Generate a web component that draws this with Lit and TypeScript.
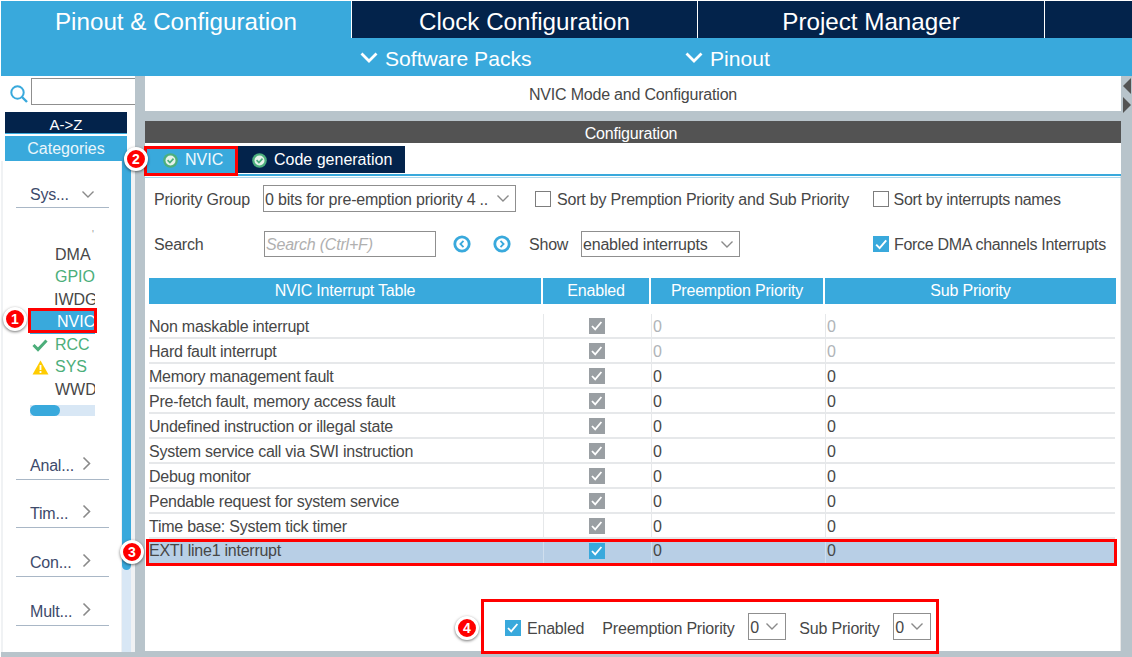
import { LitElement, html, css, svg } from "lit";
import { customElement } from "lit/decorators.js";

const chevron = (c = "#8a8a8a", w = 1.4) => html`<svg class="chev" width="14" height="9" viewBox="0 0 14 9"><path d="M1.5 1.5 7 7l5.5-5.5" fill="none" stroke=${c} stroke-width=${w}/></svg>`;
const chevBig = html`<svg width="18" height="11" viewBox="0 0 18 11"><path d="M1.5 1.5 9 9l7.5-7.5" fill="none" stroke="#fff" stroke-width="2.8"/></svg>`;
const chevRight = html`<svg width="9" height="15" viewBox="0 0 9 15"><path d="M1.5 1.5 7.5 7.5l-6 6" fill="none" stroke="#8a8a8a" stroke-width="1.6"/></svg>`;
const tick = svg`<path d="M3 8l3.2 3.4L12.4 4" fill="none" stroke="#fff" stroke-width="1.8"/>`;
const checkbox = (kind: "off" | "on" | "grey") => html`<span class="cb ${kind}">${kind === "off" ? "" : html`<svg width="15" height="15" viewBox="0 0 15 15">${tick}</svg>`}</span>`;
const okBadge = html`<svg width="15" height="15" viewBox="0 0 15 15"><circle cx="7.5" cy="7.5" r="7.3" fill="#4caf7d"/><circle cx="7.5" cy="7.5" r="5" fill="#e6f3ea"/><path d="M4.6 7.2l2.3 2.4 3.6-3.9" fill="none" stroke="#4caf7d" stroke-width="1.7"/></svg>`;
const navBtn = (left: boolean) => html`<svg width="18" height="18" viewBox="0 0 18 18"><circle cx="9" cy="9" r="7.2" fill="none" stroke="#39a9dc" stroke-width="2.8"/><path d=${left ? "M10.5 5.8 7.4 9l3.1 3.2" : "M7.5 5.8 10.6 9l-3.1 3.2"} fill="none" stroke="#39a9dc" stroke-width="1.8"/></svg>`;

const rows: [string, boolean][] = [
  ["Non maskable interrupt", true],
  ["Hard fault interrupt", true],
  ["Memory management fault", false],
  ["Pre-fetch fault, memory access fault", false],
  ["Undefined instruction or illegal state", false],
  ["System service call via SWI instruction", false],
  ["Debug monitor", false],
  ["Pendable request for system service", false],
  ["Time base: System tick timer", false],
];

@customElement("app-root")
export class AppRoot extends LitElement {
  static styles = css`
    :host { display: block; position: relative; width: 1132px; height: 657px; overflow: hidden; background: #fff;
      font-family: "Liberation Sans", Arial, sans-serif; font-size: 16px; letter-spacing: -0.2px; color: #474747; box-sizing: border-box; padding: 1px 0 0 1px; }
    * { box-sizing: border-box; }
    .tabs { display: flex; height: 37px; background: #03234b; color: #fff; font-size: 24.2px; letter-spacing: 0; }
    .tab { display: flex; align-items: center; justify-content: center; border-right: 1px solid #fff; padding-top: 4px; }
    .tab.active { width: 351px; background: #39a9dc; }
    .tab.clock { width: 346px; }
    .tab.project { width: 347px; }
    .subbar { height: 38px; background: #39a9dc; color: #fff; font-size: 21.1px; letter-spacing: 0; display: flex; align-items: center; padding: 3px 0 0 359px; }
    .sub { display: flex; align-items: center; gap: 7px; }
    .sub svg { margin-top: -2px; }
    .sub.packs { width: 325px; }
    .main { display: flex; height: 581px; background: #b8c4cb; }
    .left { width: 134px; background: #fff; display: flex; flex-direction: column; height: 576px; }
    .search { height: 36px; display: flex; align-items: flex-start; padding: 2px 0 0 8px; gap: 2px; }
    .search svg { margin-top: 6px; }
    .search .in { flex: 1; height: 27px; border: 1px solid #8f8f8f; border-right: none; }
    .az { margin-left: 4px; width: 122px; height: 22px; background: #03234b; color: #fff; text-align: center; line-height: 26px; font-size: 15px; letter-spacing: 0; border-bottom: 1px solid #39a9dc; }
    .cat { margin: 2px 0 0 4px; width: 122px; height: 25px; background: #39a9dc; color: #eaf6fb; text-align: center; line-height: 25px; letter-spacing: 0; }
    .side { flex: 1; display: flex; background: #f0f2f4; padding-left: 2px; min-height: 0; }
    .card { width: 118px; background: #fff; padding: 2px 0 0 13px; }
    .sec { width: 93px; border-bottom: 1px solid #a9b7c6; display: flex; justify-content: space-between; padding: 6px 18px 0 14px; color: #3d4a6b; }
    .sec svg { margin-top: -1px; }
    .sec.sys { height: 45px; padding: 23px 14px 0 14px; }
    .sec.sys svg { margin-top: 4px; }
    .sec.anal { margin-top: 35px; height: 29px; }
    .sec.rest { margin-top: 19px; height: 29px; }
    .sec.last { margin-top: 20px; height: 29px; }
    .list { margin: 21px 0 0 14px; width: 65px; overflow: hidden; white-space: nowrap; letter-spacing: 0; }
    .dot { height: 14.6px; font-size: 10px; padding-left: 62px; color: #999; }
    .it { height: 22.5px; line-height: 22px; padding-left: 25px; position: relative; }
    .it.green { color: #4cae7a; }
    .it.sel { background: #39a9dc; color: #fff; padding-left: 27px; }
    .it.iw { padding-left: 24px; }
    .it svg { position: absolute; left: 2px; top: 4px; }
    .hbar { height: 11px; margin-top: 4.4px; background: #d8e7f5; }
    .hbar i { display: block; width: 30px; height: 11px; border-radius: 6px; background: #39a9dc; }
    .vbar { width: 9px; margin-left: 1px; background: #d8e7f5; }
    .vbar i { display: block; height: 409px; border-radius: 0 0 5px 5px; background: #39a9dc; }
    .gutter { width: 10px; }
    .content { width: 976px; height: 575px; background: #fff; display: flex; flex-direction: column; position: relative; }
    .title { height: 35px; text-align: center; line-height: 38px; background: #fff; }
    .band { height: 10px; background: #b8c4cb; }
    .cfg { height: 22px; background: #535353; color: #fff; text-align: center; line-height: 26px; padding-right: 4px; }
    .ctabs { height: 33px; display: flex; padding: 3px 0 0 1px; gap: 2px; border-bottom: 2px solid #39a9dc; position: relative; }
    .ctabs::after { content: ""; position: absolute; left: 0; right: 0; bottom: -4px; height: 1px; background: #a9d8ee; }
    .ctab { height: 27px; display: flex; align-items: center; gap: 7px; color: #fff; background: #03234b; padding-top: 1px; letter-spacing: 0; }
    .ctab.on { width: 90px; background: #39a9dc; padding-left: 17px; color: #f0f9fd; }
    .ctab.off { width: 167px; padding-left: 14px; }
    .body { flex: 1; padding: 9px 5px 0 4px; display: flex; flex-direction: column; border-right: 1px solid #e8e8e8; }
    .line { display: flex; align-items: center; height: 27px; position: relative; }
    .line + .line { margin-top: 19px; height: 26px; }
    .sel-box { height: 100%; border: 1px solid #8f8f8f; display: flex; align-items: center; justify-content: space-between; padding: 0 5px 0 1px; white-space: nowrap; overflow: hidden; }
    .sel-box span { padding-top: 2px; }
    .lab { white-space: nowrap; padding-top: 2px; }
    .w-pg { margin-left: 5px; width: 109px; }
    .sg { width: 253px; }
    .cb { display: inline-flex; width: 16px; height: 16px; flex: none; }
    .cb.off { border: 1px solid #7d7d7d; }
    .cb.on { background: #39a9dc; }
    .cb.grey { background: #9a9fa3; }
    .m1 { margin-left: 19px; }
    .m2 { margin-left: 6px; }
    .m3 { margin-left: 23.6px; }
    .tight { margin-left: 5px; letter-spacing: -0.3px; }
    .w-s { margin-left: 5px; width: 110px; }
    .sinput { width: 172px; height: 100%; border: 1px solid #8f8f8f; font-style: italic; color: #b0b0b0; line-height: 26px; padding-left: 1px; }
    .navs { display: flex; gap: 22px; margin-left: 17px; }
    .show { margin-left: 18px; width: 52px; }
    .ss { width: 159px; }
    .push { margin-left: 133px; }
    .thead, .tr { display: grid; grid-template-columns: 394px 108px 174px 291px; }
    .thead { margin-top: 21px; height: 24px; color: #fff; text-align: center; line-height: 26px; }
    .thead div { background: #39a9dc; border-right: 2px solid #fff; }
    .thead div:last-child { border-right: none; }
    .tb { margin-top: 12px; letter-spacing: -0.25px; }
    .tr { height: 25px; line-height: 25px; border-bottom: 2px solid #e6e8ea; }
    .tr > div { border-left: 1px solid #e6e8ea; padding-left: 1px; }
    .tr > div:first-child { border-left: none; padding-left: 0; }
    .tr .ck { display: flex; justify-content: center; padding-top: 4px; padding-left: 0; padding-right: 2px; }
    .tr .dim { color: #b0b4b8; }
    .tr.hl { background: #b8cfe6; border-bottom: none; height: 24px; line-height: 24px; }
    .tr.hl > div { border-left-color: #d0dfee; }
    .foot { flex: 1; display: flex; align-items: flex-start; padding: 50px 0 0 356px; }
    .foot .f1 { margin-left: 6px; }
    .foot .f2 { margin-left: 18px; width: 146px; }
    .foot .f3 { margin-left: 13px; width: 94px; }
    .mini { width: 38px; height: 27px; padding-right: 6px; padding-left: 1px; flex: none; }
    .foot .lab { margin-top: 5px; }
    .foot .cb { margin-top: 7px; }
    .right { width: 11px; position: relative; }
    .right i { position: absolute; left: 2px; width: 0; height: 0; border-top: 8px solid transparent; border-bottom: 8px solid transparent; }
    .right .l { top: 2px; border-right: 8px solid #535353; }
    .right .r { top: 21px; border-left: 8px solid #535353; }
    .box { position: absolute; border: 3px solid #f00; }
    .b1 { left: 28px; top: 308px; width: 69px; height: 25px; }
    .b2 { left: 144px; top: 146px; width: 94px; height: 30px; }
    .b3 { left: 146px; top: 539px; width: 971px; height: 27px; }
    .b4 { left: 481px; top: 599px; width: 458px; height: 55px; }
    .badge { position: absolute; width: 24px; height: 24px; border-radius: 50%; background: #f00; border: 3px solid #fff; box-shadow: 0 1px 3px rgba(0,0,0,.55);
      color: #fff; font: bold 14px/18px "Liberation Sans", Arial, sans-serif; letter-spacing: 0; text-align: center; }
    .n1 { left: 3px; top: 307px; }
    .n2 { left: 124px; top: 147px; }
    .n3 { left: 120px; top: 540px; }
    .n4 { left: 455px; top: 616px; }
  `;

  render() {
    return html`
      <div class="tabs">
        <div class="tab active">Pinout &amp; Configuration</div>
        <div class="tab clock">Clock Configuration</div>
        <div class="tab project">Project Manager</div>
      </div>
      <div class="subbar">
        <div class="sub packs">${chevBig}Software Packs</div>
        <div class="sub">${chevBig}Pinout</div>
      </div>
      <div class="main">
        <div class="left">
          <div class="search">
            <svg width="20" height="20" viewBox="0 0 20 20"><circle cx="8.5" cy="8.5" r="6.2" fill="none" stroke="#39a9dc" stroke-width="2"/><path d="M13 13l5 5" stroke="#39a9dc" stroke-width="2.4"/></svg>
            <div class="in"></div>
          </div>
          <div class="az">A-&gt;Z</div>
          <div class="cat">Categories</div>
          <div class="side">
            <div class="card">
              <div class="sec sys">Sys...${chevron()}</div>
              <div class="list">
                <div class="dot">'</div>
                <div class="it">DMA</div>
                <div class="it green">GPIO</div>
                <div class="it iw">IWDG</div>
                <div class="it sel">NVIC</div>
                <div class="it green"><svg width="16" height="14" viewBox="0 0 16 14"><path d="M1.5 7l4.5 4.5L14.5 2.5" fill="none" stroke="#4cae7a" stroke-width="3"/></svg>RCC</div>
                <div class="it green"><svg width="17" height="15" viewBox="0 0 17 15"><path d="M8.5 0.5 16.5 14.5H.5z" fill="#ffcc00"/><path d="M8.5 5v5M8.5 11v2" stroke="#fff" stroke-width="1.8"/></svg>SYS</div>
                <div class="it">WWDG</div>
                <div class="hbar"><i></i></div>
              </div>
              <div class="sec anal">Anal...${chevRight}</div>
              <div class="sec rest">Tim...${chevRight}</div>
              <div class="sec last">Con...${chevRight}</div>
              <div class="sec last">Mult...${chevRight}</div>
            </div>
            <div class="vbar"><i></i></div>
          </div>
        </div>
        <div class="gutter"></div>
        <div class="content">
          <div class="title">NVIC Mode and Configuration</div>
          <div class="band"></div>
          <div class="cfg">Configuration</div>
          <div class="ctabs">
            <div class="ctab on">${okBadge}NVIC</div>
            <div class="ctab off">${okBadge}Code generation</div>
          </div>
          <div class="body">
            <div class="line">
              <span class="lab w-pg">Priority Group</span>
              <div class="sel-box sg"><span>0 bits for pre-emption priority 4 ..</span>${chevron()}</div>
              <span class="cb off m1"></span><span class="lab m2">Sort by Premption Priority and Sub Priority</span>
              <span class="cb off m3"></span><span class="lab tight">Sort by interrupts names</span>
            </div>
            <div class="line">
              <span class="lab w-s">Search</span>
              <div class="sinput">Search (Ctrl+F)</div>
              <div class="navs">${navBtn(true)}${navBtn(false)}</div>
              <span class="lab show">Show</span>
              <div class="sel-box ss"><span>enabled interrupts</span>${chevron()}</div>
              <span class="cb on push">${html`<svg width="16" height="16" viewBox="0 0 15 15">${tick}</svg>`}</span><span class="lab tight">Force DMA channels Interrupts</span>
            </div>
            <div class="thead">
              <div>NVIC Interrupt Table</div><div>Enabled</div><div>Preemption Priority</div><div>Sub Priority</div>
            </div>
            <div class="tb">
              ${rows.map(([name, dim]) => html`
                <div class="tr">
                  <div>${name}</div>
                  <div class="ck">${checkbox("grey")}</div>
                  <div class=${dim ? "dim" : ""}>0</div>
                  <div class=${dim ? "dim" : ""}>0</div>
                </div>`)}
              <div class="tr hl">
                <div>EXTI line1 interrupt</div>
                <div class="ck">${checkbox("on")}</div>
                <div>0</div><div>0</div>
              </div>
            </div>
            <div class="foot">
              ${checkbox("on")}<span class="lab f1">Enabled</span>
              <span class="lab f2">Preemption Priority</span>
              <div class="sel-box mini"><span>0</span>${chevron()}</div>
              <span class="lab f3">Sub Priority</span>
              <div class="sel-box mini"><span>0</span>${chevron()}</div>
            </div>
          </div>
        </div>
        <div class="right"><i class="l"></i><i class="r"></i></div>
      </div>
      <div class="box b1"></div><div class="box b2"></div><div class="box b3"></div><div class="box b4"></div>
      <div class="badge n1">1</div><div class="badge n2">2</div><div class="badge n3">3</div><div class="badge n4">4</div>
    `;
  }
}
